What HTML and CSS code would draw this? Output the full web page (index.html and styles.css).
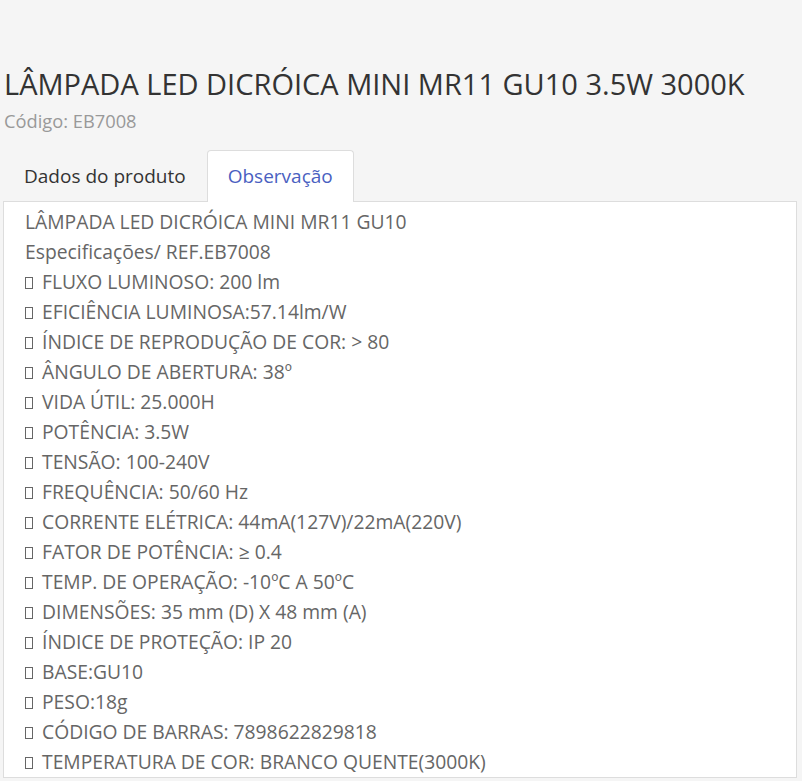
FILE: index.html
```html
<!DOCTYPE html>
<html lang="pt-BR">
<head>
<meta charset="utf-8">
<title>LÂMPADA LED DICRÓICA MINI MR11 GU10 3.5W 3000K</title>
<link rel="stylesheet" href="styles.css">
</head>
<body>
<div class="page">
  <h1 class="title">LÂMPADA LED DICRÓICA MINI MR11 GU10 3.5W 3000K</h1>
  <p class="code">Código: EB7008</p>
  <ul class="tabs">
    <li class="tab">Dados do produto</li>
    <li class="tab active">Observação</li>
  </ul>
  <div class="panel">
    <p class="line">LÂMPADA LED DICRÓICA MINI MR11 GU10</p>
    <p class="line">Especificações/ REF.EB7008</p>
    <p class="line"><span class="box"></span> FLUXO LUMINOSO: 200 lm</p>
    <p class="line"><span class="box"></span> EFICIÊNCIA LUMINOSA:57.14lm/W</p>
    <p class="line"><span class="box"></span> ÍNDICE DE REPRODUÇÃO DE COR: &gt; 80</p>
    <p class="line"><span class="box"></span> ÂNGULO DE ABERTURA: 38º</p>
    <p class="line"><span class="box"></span> VIDA ÚTIL: 25.000H</p>
    <p class="line"><span class="box"></span> POTÊNCIA: 3.5W</p>
    <p class="line"><span class="box"></span> TENSÃO: 100-240V</p>
    <p class="line"><span class="box"></span> FREQUÊNCIA: 50/60 Hz</p>
    <p class="line"><span class="box"></span> CORRENTE ELÉTRICA: 44mA(127V)/22mA(220V)</p>
    <p class="line"><span class="box"></span> FATOR DE POTÊNCIA: ≥ 0.4</p>
    <p class="line"><span class="box"></span> TEMP. DE OPERAÇÃO: -10ºC A 50ºC</p>
    <p class="line"><span class="box"></span> DIMENSÕES: 35 mm (D) X 48 mm (A)</p>
    <p class="line"><span class="box"></span> ÍNDICE DE PROTEÇÃO: IP 20</p>
    <p class="line"><span class="box"></span> BASE:GU10</p>
    <p class="line"><span class="box"></span> PESO:18g</p>
    <p class="line"><span class="box"></span> CÓDIGO DE BARRAS: 7898622829818</p>
    <p class="line"><span class="box"></span> TEMPERATURA DE COR: BRANCO QUENTE(3000K)</p>
  </div>
</div>
</body>
</html>
```
FILE: styles.css
```css
html, body {
  margin: 0;
  padding: 0;
  background: #f5f5f5;
}
body {
  font-family: "Open Sans", "Noto Sans", sans-serif;
  color: #333;
}
.page {
  padding: 63px 5px 0 3px;
}
.title {
  margin: 0 0 0 1px;
  font-size: 29px;
  font-weight: 400;
  line-height: 42px;
  color: #333;
}
.code {
  margin: 1px 0 0 1px;
  font-size: 18.3px;
  line-height: 30px;
  color: #999;
}
.tabs {
  list-style: none;
  margin: 14px 0 0 0;
  padding: 0;
  display: flex;
}
.tab {
  font-size: 19px;
  line-height: 26px;
  padding: 12px 20px;
  border: 1px solid transparent;
  border-bottom: 0;
  border-radius: 4px 4px 0 0;
  color: #333;
  margin-bottom: -1px;
}
.tab.active {
  background: #fff;
  border-color: #ddd;
  color: #4a5fc1;
  padding-bottom: 13px;
}
.panel {
  background: #fff;
  border: 1px solid #ddd;
  padding: 5px 20px 0 21px;
  color: #666;
  font-size: 19.3px;
}
.line {
  margin: 0;
  line-height: 30px;
}
.box {
  display: inline-block;
  box-sizing: border-box;
  width: 8px;
  height: 12px;
  border: 1px solid #666;
  vertical-align: 0;
  margin-right: 4px;
}
```
